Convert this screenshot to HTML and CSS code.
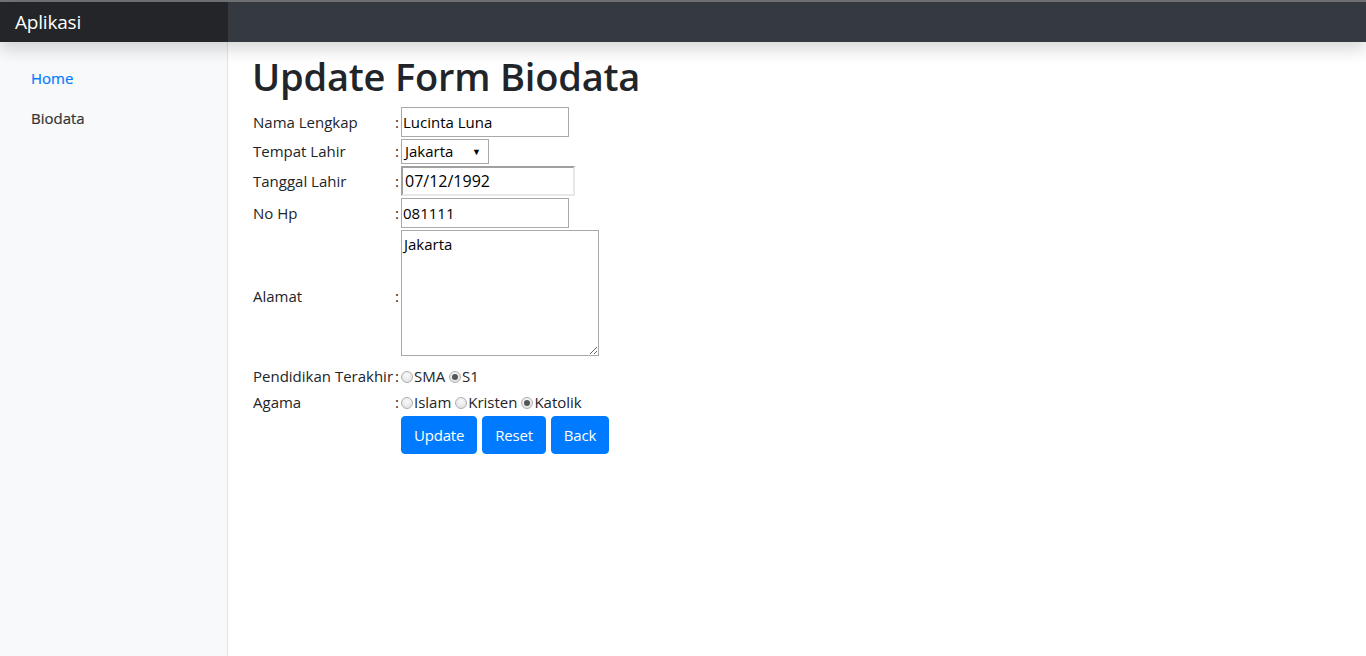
FILE: index.html
```html
<!DOCTYPE html>
<html lang="id">
<head>
<meta charset="utf-8">
<title>Update Form Biodata</title>
<link rel="stylesheet" href="styles.css">
</head>
<body>
<div class="topline"></div>
<nav class="navbar">
  <a class="brand" href="#">Aplikasi</a>
</nav>
<div class="layout">
  <aside class="sidebar">
    <ul class="nav">
      <li><a class="nav-link active" href="#">Home</a></li>
      <li><a class="nav-link" href="#">Biodata</a></li>
    </ul>
  </aside>
  <main class="main">
    <h1 class="title">Update Form Biodata</h1>
    <form>
      <table class="form-table">
        <tr>
          <td class="lbl">Nama Lengkap</td>
          <td class="colon">:</td>
          <td class="ctl"><input class="txt" type="text" value="Lucinta Luna"></td>
        </tr>
        <tr>
          <td class="lbl">Tempat Lahir</td>
          <td class="colon">:</td>
          <td class="ctl">
            <div class="select"><span>Jakarta</span><span class="arrow">&#9660;</span></div>
          </td>
        </tr>
        <tr>
          <td class="lbl">Tanggal Lahir</td>
          <td class="colon">:</td>
          <td class="ctl"><input class="txt date" type="text" value="07/12/1992"></td>
        </tr>
        <tr>
          <td class="lbl">No Hp</td>
          <td class="colon">:</td>
          <td class="ctl"><input class="txt" type="text" value="081111"></td>
        </tr>
        <tr>
          <td class="lbl">Alamat</td>
          <td class="colon">:</td>
          <td class="ctl"><textarea class="area">Jakarta</textarea></td>
        </tr>
        <tr>
          <td class="lbl">Pendidikan Terakhir</td>
          <td class="colon">:</td>
          <td class="ctl line">
            <span class="radio"></span><span class="rtxt">SMA</span>
            <span class="radio on"></span><span class="rtxt">S1</span>
          </td>
        </tr>
        <tr>
          <td class="lbl">Agama</td>
          <td class="colon">:</td>
          <td class="ctl line">
            <span class="radio"></span><span class="rtxt">Islam</span>
            <span class="radio"></span><span class="rtxt">Kristen</span>
            <span class="radio on"></span><span class="rtxt">Katolik</span>
          </td>
        </tr>
        <tr>
          <td class="lbl"></td>
          <td class="colon"></td>
          <td class="ctl">
            <div class="btns">
              <button type="button" class="btn">Update</button>
              <button type="button" class="btn">Reset</button>
              <button type="button" class="btn">Back</button>
            </div>
          </td>
        </tr>
      </table>
    </form>
  </main>
</div>
</body>
</html>
```
FILE: styles.css
```css
* { box-sizing: border-box; }
html, body { margin: 0; padding: 0; }
body {
  font-family: "Open Sans", "Noto Sans", "Liberation Sans", sans-serif;
  font-size: 16px;
  line-height: 1.5;
  color: #212529;
  background: #fff;
  height: 656px;
  overflow: hidden;
}
.topline { height: 2px; background: #6f7173; }
.navbar {
  height: 40px;
  background: #343a40;
  display: flex;
  position: relative;
  z-index: 2;
  box-shadow: 0 8px 16px rgba(0,0,0,0.15);
}
.brand {
  width: 228px;
  background: #232528;
  color: #fff;
  text-decoration: none;
  font-size: 19px;
  line-height: 40px;
  padding-left: 15px;
  letter-spacing: -0.2px;
}
.layout { display: flex; height: 614px; }
.sidebar {
  width: 228px;
  flex: none;
  background: #f8f9fa;
  border-right: 1px solid #e3e4e6;
  padding: 16px 0 0 15px;
}
.nav { list-style: none; margin: 0; padding: 0; }
.nav-link {
  display: block;
  padding: 8px 16px;
  color: #333;
  text-decoration: none;
  font-weight: 500;
  font-size: 15px;
  line-height: 24px;
  -webkit-text-stroke: 0.2px currentColor;
}
.nav-link.active { color: #007bff; }
.main { flex: 1; padding: 0 24px; }
.title {
  margin: 12px 0 8px;
  font-size: 38px;
  line-height: 44px;
  font-weight: 600;
  letter-spacing: -0.2px;
}
.form-table { border-collapse: separate; border-spacing: 0; }
.form-table td { padding: 1px 0; vertical-align: middle; font-size: 15px; letter-spacing: 0; }
.form-table td.lbl { width: 143px; padding-left: 1px; }
.form-table td.colon { width: 6px; padding-left: 0; }
.txt {
  display: block;
  width: 168px;
  height: 30px;
  border: 1px solid #a9a9a9;
  padding: 0 1px;
  margin: 0;
  font-family: inherit;
  font-size: 15px;
  color: #000;
  background: #fff;
}
.txt.date {
  width: 174px;
  border: 2px solid #e8e8e8;
  border-top-color: #a0a0a0;
  border-left-color: #a0a0a0;
  font-size: 16px;
  padding-left: 2px;
}
.select {
  width: 88px;
  height: 25px;
  border: 1px solid #a9a9a9;
  display: flex;
  align-items: center;
  justify-content: space-between;
  padding: 0 7px 0 3px;
  font-size: 15px;
  color: #000;
  background: #fff;
}
.select .arrow { font-size: 9px; line-height: 1; }
.area {
  display: block;
  width: 198px;
  height: 126px;
  border: 1px solid #a9a9a9;
  margin: 0 0 6px;
  padding: 3px 2px;
  font-family: inherit;
  font-size: 15px;
  color: #000;
  resize: both;
}
.line { line-height: 24px; white-space: nowrap; }
.radio {
  display: inline-block;
  width: 12px;
  height: 12px;
  border-radius: 50%;
  border: 1px solid #b0b0b0;
  background: radial-gradient(circle at 50% 35%, #fafafa, #dcdcdc);
  vertical-align: -1px;
  margin-right: 1px;
  position: relative;
}
.radio.on::after {
  content: "";
  position: absolute;
  left: 2px; top: 2px;
  width: 6px; height: 6px;
  border-radius: 50%;
  background: #555;
}
.rtxt { color: #212529; }
.btns { display: flex; gap: 5px; }
.btn {
  height: 38px;
  padding: 0 12px;
  border: 1px solid #007bff;
  border-radius: 4px;
  background: #007bff;
  color: #fff;
  font-family: inherit;
  font-size: 15px;
  letter-spacing: -0.2px;
  cursor: pointer;
}
```
